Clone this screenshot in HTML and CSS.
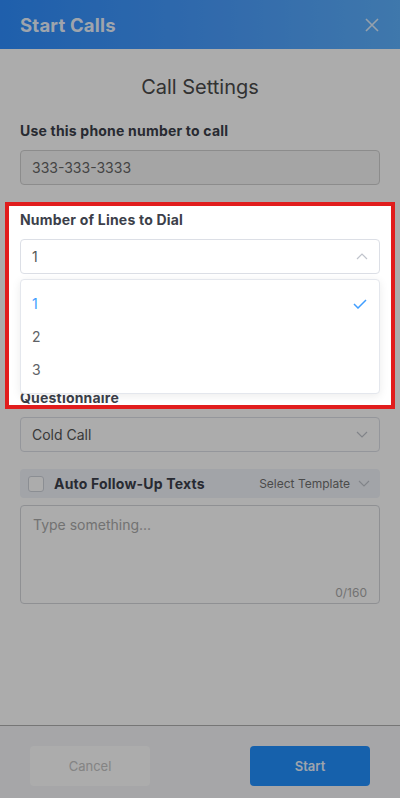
FILE: index.html
```html
<!DOCTYPE html>
<html lang="en">
<head>
    <meta charset="UTF-8">
    <meta name="viewport" content="width=device-width, initial-scale=1.0">
    <title>Start Calls</title>
    <link rel="stylesheet" href="styles.css">
</head>
<body>
    <div class="modal">
        <header class="modal-head">
            <h1>Start Calls</h1>
            <button class="close-btn" aria-label="Close">
                <svg width="14" height="14" viewBox="0 0 14 14"><path d="M1 1L13 13M13 1L1 13" stroke="currentColor" stroke-width="1.6" fill="none"/></svg>
            </button>
        </header>

        <main class="modal-body">
            <h2 class="section-title">Call Settings</h2>

            <div class="field">
                <label>Use this phone number to call</label>
                <input class="input" type="text" value="333-333-3333" disabled>
            </div>

            <div class="field field-lines">
                <label>Number of Lines to Dial</label>
                <div class="select is-open">
                    <span>1</span>
                    <svg class="chevron" width="12" height="7" viewBox="0 0 12 7"><path d="M1 6L6 1L11 6" stroke="currentColor" stroke-width="1.2" fill="none"/></svg>
                    <ul class="dropdown">
                        <li class="selected">1
                            <svg width="14" height="10" viewBox="0 0 14 10"><path d="M1 5L5 9L13 1" stroke="currentColor" stroke-width="1.5" fill="none"/></svg>
                        </li>
                        <li>2</li>
                        <li>3</li>
                    </ul>
                </div>
            </div>

            <div class="field field-quest">
                <label>Questionnaire</label>
                <div class="select">
                    <span>Cold Call</span>
                    <svg class="chevron" width="12" height="7" viewBox="0 0 12 7"><path d="M1 1L6 6L11 1" stroke="currentColor" stroke-width="1.2" fill="none"/></svg>
                </div>
            </div>

            <div class="auto-row">
                <span class="checkbox"></span>
                <span class="auto-label">Auto Follow-Up Texts</span>
                <span class="template">Select Template
                    <svg width="12" height="7" viewBox="0 0 12 7"><path d="M1 1L6 6L11 1" stroke="currentColor" stroke-width="1.2" fill="none"/></svg>
                </span>
            </div>

            <div class="textarea">
                <span class="placeholder">Type something...</span>
                <span class="counter">0/160</span>
            </div>
        </main>

        <footer class="modal-foot">
            <button class="btn btn-cancel">Cancel</button>
            <button class="btn btn-start">Start</button>
        </footer>
    </div>

    <!-- tour highlight over the lines field -->
    <div class="tour-spot"></div>
</body>
</html>
```

FILE: styles.css
```css
* {
    box-sizing: border-box;
}

html, body {
    margin: 0;
    height: 100%;
}

body {
    font-family: 'Inter', 'Noto Sans', sans-serif;
    background: #fff;
    color: #3c3f4a;
    overflow: hidden;
}

.modal {
    display: flex;
    flex-direction: column;
    height: 100vh;
}

.modal-head {
    height: 49px;
    flex: none;
    display: flex;
    align-items: center;
    justify-content: space-between;
    padding: 0 20px;
    background: linear-gradient(90deg, #2e8eff 0%, #4a9eff 55%, #5eb2ff 100%);
}

.modal-head h1 {
    margin: 0;
    font-size: 18.5px;
    font-weight: 700;
    letter-spacing: 0.2px;
    color: rgba(255, 255, 255, 0.92);
}

.close-btn {
    border: none;
    background: none;
    padding: 0;
    margin-right: 1px;
    color: rgba(255, 255, 255, 0.8);
    display: flex;
}

.modal-body {
    flex: 1;
    padding: 26px 20px 0;
}

.section-title {
    margin: 0 0 22px;
    text-align: center;
    font-size: 20px;
    line-height: 24px;
    font-weight: 400;
    color: #4a4a4a;
}

.field {
    margin-bottom: 25px;
}

.field label {
    display: block;
    font-size: 14px;
    line-height: 20px;
    font-weight: 700;
    letter-spacing: 0.2px;
    color: #3c3f4a;
    margin-bottom: 9px;
}

.field-lines {
    margin-bottom: 114px;
}

.field-quest {
    margin-bottom: 17px;
}

.input {
    width: 100%;
    height: 35px;
    padding: 0 11px;
    font-family: inherit;
    font-size: 14px;
    color: #666;
    background: #f5f5f5;
    border: 1px solid #d0d0d0;
    border-radius: 4px;
}

.select {
    position: relative;
    height: 35px;
    display: flex;
    align-items: center;
    justify-content: space-between;
    padding: 0 11px;
    font-size: 14px;
    color: #555;
    border: 1px solid #dcdfe6;
    border-radius: 4px;
    background: #fff;
}

.chevron {
    color: #c0c4cc;
}

.dropdown {
    position: absolute;
    top: 39px;
    left: -1px;
    right: -1px;
    margin: 0;
    padding: 7px 0;
    list-style: none;
    background: #fff;
    border: 1px solid #e4e7ed;
    border-radius: 4px;
    box-shadow: 0 2px 10px rgba(0, 0, 0, 0.08);
    z-index: 5;
}

.dropdown li {
    height: 33px;
    display: flex;
    align-items: center;
    justify-content: space-between;
    padding: 0 12px 0 11px;
    font-size: 14px;
    color: #606266;
}

.dropdown li.selected {
    color: #409eff;
}

.auto-row {
    height: 29px;
    display: flex;
    align-items: center;
    padding: 0 8px;
    background: #f1f4fa;
    border-radius: 4px;
    margin-bottom: 7px;
}

.checkbox {
    width: 16px;
    height: 16px;
    border: 1px solid #cfd3db;
    border-radius: 3px;
    background: #fff;
    margin-right: 10px;
}

.auto-label {
    font-size: 14px;
    font-weight: 700;
    letter-spacing: 0.2px;
    color: #3c3f4a;
}

.template {
    margin-left: auto;
    display: flex;
    align-items: center;
    gap: 8px;
    font-size: 12px;
    color: #707070;
}

.template svg {
    color: #c0c4cc;
    margin-right: 2px;
}

.textarea {
    position: relative;
    height: 99px;
    border: 1px solid #d4d6db;
    border-radius: 4px;
    padding: 8px 12px;
    background: #fff;
}

.placeholder {
    font-size: 14px;
    color: #aaa;
}

.counter {
    position: absolute;
    right: 12px;
    bottom: 3px;
    font-size: 12px;
    color: #aaa;
}

.modal-foot {
    flex: none;
    height: 73px;
    display: flex;
    justify-content: space-between;
    align-items: flex-start;
    padding: 20px 30px 0;
    border-top: 1px solid #b0b0b0;
    background: #f6f7fa;
}

.btn {
    width: 120px;
    height: 40px;
    border: none;
    border-radius: 4px;
    font-family: inherit;
    font-size: 13px;
}

.btn-cancel {
    background: #fff;
    color: #c4c4c4;
}

.btn-start {
    background: #2190ff;
    color: rgba(255, 255, 255, 0.92);
    font-weight: 600;
}

.tour-spot {
    position: fixed;
    left: 5px;
    top: 202px;
    width: 390px;
    height: 207px;
    border: 4px solid #e11d1d;
    box-shadow: 0 0 0 2000px rgba(0, 0, 0, 0.325);
    pointer-events: none;
    z-index: 10;
}
```
